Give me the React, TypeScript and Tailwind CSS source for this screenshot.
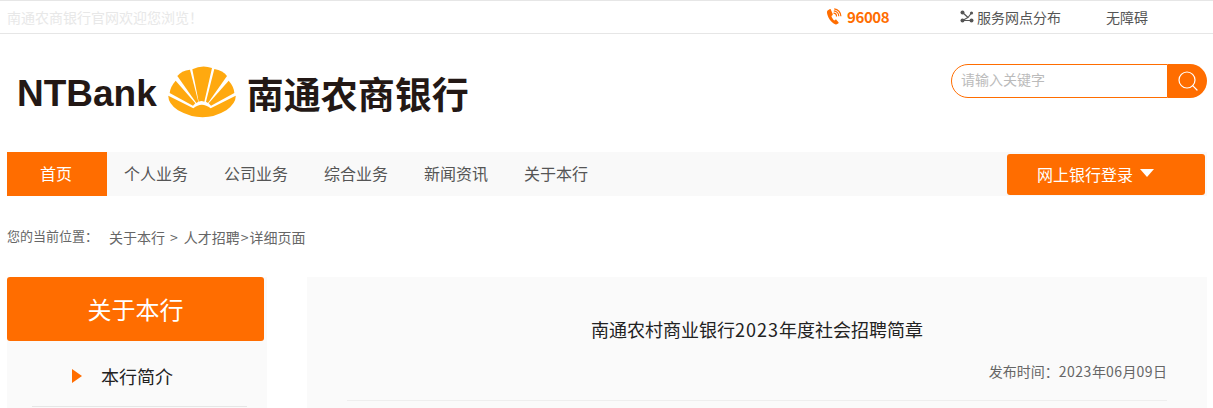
import { Search } from "lucide-react";

const navItems = ["个人业务", "公司业务", "综合业务", "新闻资讯", "关于本行"];
const COLON = "\uFF1A";
const BANG = "\uFF01";

const PhoneIcon = () => (
  <svg width="17" height="17" viewBox="0 0 17 17" className="text-[#ff6d00]" fill="none">
    <path
      d="M3.6 1.2 1.6 2.6C.7 3.4.9 5 1.5 6.9c.9 3 2.7 5.6 4.9 7.6 1.3 1.2 2.7 2.1 3.8 1.9l2-1c.5-.3.6-.8.3-1.2l-2-2.3c-.3-.4-.8-.4-1.2-.1l-.9.6c-.9-.3-2.5-2.8-3-4.5l1-.7c.4-.3.5-.7.3-1.2L4.800 1.500c-.3-.5-.8-.6-1.200-.3Z"
      fill="currentColor"
    />
    <path d="M7.500 5.200a3.200 3.200 0 0 1 3 3.300M7.800 2.900a5.500 5.500 0 0 1 5 5.400M8.200.8a7.600 7.600 0 0 1 6.700 7.400" stroke="currentColor" strokeWidth="1.200" />
  </svg>
);

const BranchIcon = () => (
  <svg width="14" height="13" viewBox="0 0 14 13" fill="none">
    <path d="M2.500 2.500 8 7.500 2.500 10.500H11M8 7.500 11.500 3" stroke="#555" strokeWidth="1.200" />
    <circle cx="2.500" cy="2.500" r="2" fill="#555" />
    <circle cx="11.500" cy="3" r="1.600" fill="#555" />
    <circle cx="2.500" cy="10.500" r="2" fill="#555" />
    <circle cx="11.500" cy="10.500" r="2" fill="#555" />
  </svg>
);

const ShellLogo = () => (
  <svg width="68" height="54" viewBox="0 0 204 162" className="mx-[11px] mb-[3px] shrink-0" fill="#ffa90f">
    <path d="M73 13Q102-2 132 9L109 110Q100 106 92 110Z" />
    <path d="M66 14Q40 17 28 33L85 114 91 110Z" />
    <path d="M139 12Q165 17 177 33L120 114 114 110Z" />
    <path d="M23 47Q7 65 5 84L75 122 82 115Z" />
    <path d="M182 47Q198 65 199 84L129 122 122 115Z" />
    <path d="M1 92 76 130Q101 108 128 130L203 92Q205 114 175 136 105 178 30 136 0 115 1 92Z" />
  </svg>
);

const TopBar = () => (
  <div className="flex h-[34px] items-center border-y border-[#e6e6e6] pb-[1px] pl-[7px] text-sm">
    <span className="w-[819px] text-[#e8e8e8]">南通农商银行官网欢迎您浏览{BANG}</span>
    <PhoneIcon />
    <span className="ml-[4px] w-[113px] text-[15px] font-bold tracking-[-0.4px] text-[#ff6d00]">96008</span>
    <BranchIcon />
    <span className="ml-[3px] w-[129px] text-[#555]">服务网点分布</span>
    <span className="text-[#555]">无障碍</span>
  </div>
);

const Masthead = () => (
  <div className="flex h-[118px] items-center justify-between pl-[17px] pr-[6px]">
    <div className="flex items-center pt-[1px] text-[#231815]">
      <span className="font-['Liberation_Sans'] text-[37px] leading-none font-bold">NTBank</span>
      <ShellLogo />
      <span className="text-[37px] leading-none font-bold">南通农商银行</span>
    </div>
    <div className="mb-[24px] flex h-[34px] w-[256px]">
      <div className="flex flex-1 items-center rounded-l-[17px] border border-[#ff6d00] pb-[5px] pl-[9px] text-sm text-[#bbb]">
        请输入关键字
      </div>
      <div className="flex w-[39px] items-center justify-center rounded-r-[17px] bg-[#ff6d00] text-white">
        <Search size={24} strokeWidth={1.2} />
      </div>
    </div>
  </div>
);

const Nav = () => (
  <div className="ml-[7px] mr-[6px] flex h-[44px] items-center bg-[#f9f9f9] text-base text-[#555]">
    <div className="flex h-full w-[100px] items-center justify-center bg-[#ff6d00] pb-[2px] pr-[2px] text-white">首页</div>
    {navItems.map((item) => (
      <div key={item} className="w-[100px] pb-[2px] pr-[2px] text-center">
        {item}
      </div>
    ))}
    <div className="mt-[1px] ml-auto mr-[2px] flex h-[41px] w-[198px] items-center gap-[7px] rounded-[3px] bg-[#ff6d00] pb-[2px] pl-[30px] text-white">
      网上银行登录
      <span className="mb-[2px] h-0 w-0 border-x-[7px] border-t-[8px] border-x-transparent border-t-white" />
    </div>
  </div>
);

const Breadcrumb = () => (
  <div className="flex h-[81px] items-center pl-[7px] text-sm text-[#666]">
    <span className="mr-[11px] text-[13px]">您的当前位置{COLON}</span>
    <span>关于本行</span>
    <span className="ml-[5px] mr-[6px]">&gt;</span>
    <span>人才招聘</span>
    <span className="mx-[1px]">&gt;</span>
    <span>详细页面</span>
  </div>
);

const Sidebar = () => (
  <div className="w-[260px] shrink-0 bg-[#fafafa]">
    <div className="flex h-[64px] w-[257px] items-center justify-center rounded-[3px] bg-[#ff6d00] text-2xl text-white">
      关于本行
    </div>
    <div className="ml-[25px] mr-[20px] flex h-[66px] items-center border-b border-[#e6e6e6] pl-[40px] pt-[4px] text-lg text-[#222]">
      <span className="mr-[19px] h-0 w-0 border-y-[7px] border-l-[10px] border-y-transparent border-l-[#ff6d00]" />
      本行简介
    </div>
  </div>
);

const Article = () => (
  <div className="ml-[40px] flex-1 bg-[#fafafa] px-[40px]">
    <h1 className="pt-[39px] text-center text-lg leading-[27px] font-normal text-[#222]">
      南通农村商业银行<span className="tracking-[1px]">2023</span>年度社会招聘简章
    </h1>
    <div className="mt-[18px] border-b border-[#eee] pb-[19px] text-right text-sm leading-[20px] text-[#666]">
      发布时间{COLON}<span className="tracking-[0.5px]">2023</span>年<span className="tracking-[0.5px]">06</span>月<span className="tracking-[0.5px]">09</span>日
    </div>
  </div>
);

export default function App() {
  return (
    <div className="h-[408px] overflow-hidden bg-white font-['Noto_Sans_CJK_SC','Microsoft_YaHei',sans-serif]">
      <TopBar />
      <Masthead />
      <Nav />
      <Breadcrumb />
      <div className="ml-[7px] mr-[6px] flex h-[300px] items-stretch">
        <Sidebar />
        <Article />
      </div>
    </div>
  );
}
